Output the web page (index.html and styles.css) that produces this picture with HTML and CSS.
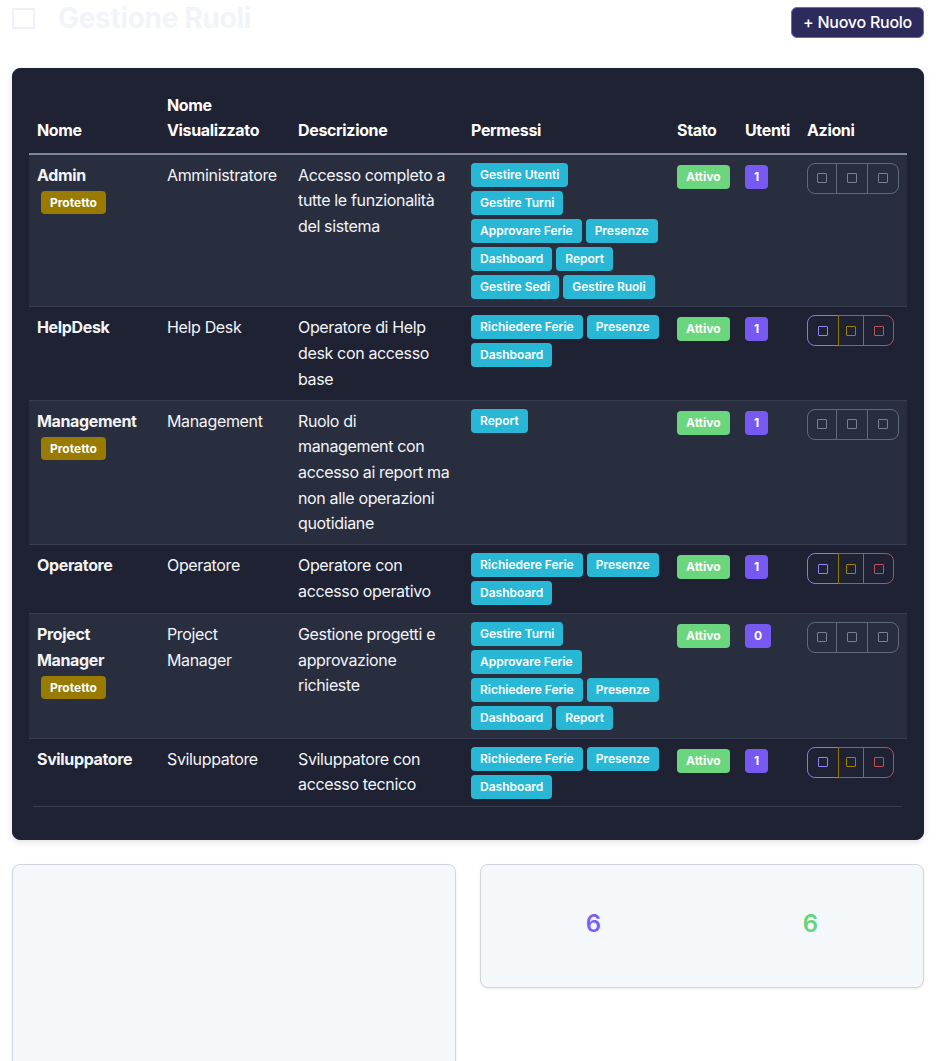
FILE: index.html
```html
<!DOCTYPE html>
<html lang="it">
<head>
<meta charset="utf-8">
<title>Gestione Ruoli</title>
<link rel="stylesheet" href="styles.css">
</head>
<body>
<div class="page">
  <header class="page-head">
    <h3 class="page-title"><span class="title-icon"></span>Gestione Ruoli</h3>
    <button class="btn-new">+ Nuovo Ruolo</button>
  </header>

  <section class="roles-card">
    <table class="roles-table">
      <colgroup>
        <col class="c-name"><col class="c-disp"><col class="c-desc"><col class="c-perm"><col class="c-state"><col class="c-users"><col class="c-act">
      </colgroup>
      <thead>
        <tr>
          <th>Nome</th>
          <th>Nome Visualizzato</th>
          <th>Descrizione</th>
          <th>Permessi</th>
          <th>Stato</th>
          <th>Utenti</th>
          <th>Azioni</th>
        </tr>
      </thead>
      <tbody>
        <tr class="striped">
          <td><div class="role-name">Admin</div><span class="protected">Protetto</span></td>
          <td>Amministratore</td>
          <td>Accesso completo a tutte le funzionalità del sistema</td>
          <td><div class="perm-list"><span class="chip">Gestire Utenti</span><span class="chip">Gestire Turni</span><span class="chip">Approvare Ferie</span><span class="chip">Presenze</span><span class="chip">Dashboard</span><span class="chip">Report</span><span class="chip">Gestire Sedi</span><span class="chip">Gestire Ruoli</span></div></td>
          <td class="badge-cell"><span class="badge badge-green">Attivo</span></td>
          <td class="badge-cell"><span class="badge badge-purple">1</span></td>
          <td><div class="actions locked"><button class="act act-edit"><span class="glyph"></span></button><button class="act act-key"><span class="glyph"></span></button><button class="act act-del"><span class="glyph"></span></button></div></td>
        </tr>
        <tr>
          <td><div class="role-name">HelpDesk</div></td>
          <td>Help Desk</td>
          <td>Operatore di Help desk con accesso base</td>
          <td><div class="perm-list"><span class="chip">Richiedere Ferie</span><span class="chip">Presenze</span><span class="chip">Dashboard</span></div></td>
          <td class="badge-cell"><span class="badge badge-green">Attivo</span></td>
          <td class="badge-cell"><span class="badge badge-purple">1</span></td>
          <td><div class="actions"><button class="act act-edit"><span class="glyph"></span></button><button class="act act-key"><span class="glyph"></span></button><button class="act act-del"><span class="glyph"></span></button></div></td>
        </tr>
        <tr class="striped">
          <td><div class="role-name">Management</div><span class="protected">Protetto</span></td>
          <td>Management</td>
          <td>Ruolo di management con accesso ai report ma non alle operazioni quotidiane</td>
          <td><div class="perm-list"><span class="chip">Report</span></div></td>
          <td class="badge-cell"><span class="badge badge-green">Attivo</span></td>
          <td class="badge-cell"><span class="badge badge-purple">1</span></td>
          <td><div class="actions locked"><button class="act act-edit"><span class="glyph"></span></button><button class="act act-key"><span class="glyph"></span></button><button class="act act-del"><span class="glyph"></span></button></div></td>
        </tr>
        <tr>
          <td><div class="role-name">Operatore</div></td>
          <td>Operatore</td>
          <td>Operatore con accesso operativo</td>
          <td><div class="perm-list"><span class="chip">Richiedere Ferie</span><span class="chip">Presenze</span><span class="chip">Dashboard</span></div></td>
          <td class="badge-cell"><span class="badge badge-green">Attivo</span></td>
          <td class="badge-cell"><span class="badge badge-purple">1</span></td>
          <td><div class="actions"><button class="act act-edit"><span class="glyph"></span></button><button class="act act-key"><span class="glyph"></span></button><button class="act act-del"><span class="glyph"></span></button></div></td>
        </tr>
        <tr class="striped">
          <td><div class="role-name">Project Manager</div><span class="protected">Protetto</span></td>
          <td>Project Manager</td>
          <td>Gestione progetti e approvazione richieste</td>
          <td><div class="perm-list"><span class="chip">Gestire Turni</span><span class="chip">Approvare Ferie</span><span class="chip">Richiedere Ferie</span><span class="chip">Presenze</span><span class="chip">Dashboard</span><span class="chip">Report</span></div></td>
          <td class="badge-cell"><span class="badge badge-green">Attivo</span></td>
          <td class="badge-cell"><span class="badge badge-purple">0</span></td>
          <td><div class="actions locked"><button class="act act-edit"><span class="glyph"></span></button><button class="act act-key"><span class="glyph"></span></button><button class="act act-del"><span class="glyph"></span></button></div></td>
        </tr>
        <tr class="last">
          <td><div class="role-name">Sviluppatore</div></td>
          <td>Sviluppatore</td>
          <td>Sviluppatore con accesso tecnico</td>
          <td><div class="perm-list"><span class="chip">Richiedere Ferie</span><span class="chip">Presenze</span><span class="chip">Dashboard</span></div></td>
          <td class="badge-cell"><span class="badge badge-green">Attivo</span></td>
          <td class="badge-cell"><span class="badge badge-purple">1</span></td>
          <td><div class="actions"><button class="act act-edit"><span class="glyph"></span></button><button class="act act-key"><span class="glyph"></span></button><button class="act act-del"><span class="glyph"></span></button></div></td>
        </tr>
      </tbody>
    </table>
    <div class="table-end"></div>
  </section>

  <section class="bottom">
    <div class="panel panel-left"></div>
    <div class="panel">
      <div class="stats">
        <div class="stat-num stat-purple">6</div>
        <div class="stat-num stat-green">6</div>
      </div>
    </div>
  </section>
</div>
</body>
</html>
```

FILE: styles.css
```css
* {
  box-sizing: border-box;
}

body {
  margin: 0;
  font-family: Inter, "Noto Sans", "Liberation Sans", sans-serif;
  background: #ffffff;
  color: #212529;
}

.page {
  padding: 2px 12px 0;
}

.page-head {
  display: flex;
  justify-content: space-between;
  align-items: center;
  margin-bottom: 24px;
}

.page-title {
  margin: 0 0 8px;
  display: flex;
  align-items: center;
  font-size: 28px;
  line-height: 1.2;
  font-weight: 700;
  letter-spacing: -0.3px;
  color: #f1f4f8;
}

.title-icon {
  width: 23px;
  height: 21px;
  border: 2px solid #eef2f6;
  margin-right: 23px;
}

.btn-new {
  font-family: inherit;
  font-size: 16px;
  font-weight: 500;
  line-height: 21px;
  letter-spacing: -0.25px;
  color: #ffffff;
  background: #2d2a5c;
  border: 1px solid #6e5ce6;
  border-radius: 6px;
  padding: 4px 11px;
}

.roles-card {
  background: #1e2233;
  border: 1px solid #1e2233;
  border-radius: 8px;
  padding: 16px 16px 16px;
  box-shadow: 0 2px 6px rgba(0, 0, 0, 0.12);
}

.roles-table {
  width: 100%;
  table-layout: fixed;
  border-collapse: collapse;
  color: #f2f4f7;
  font-size: 16px;
  line-height: 1.6;
  letter-spacing: -0.35px;
}

.c-name { width: 130px; }
.c-disp { width: 131px; }
.c-desc { width: 173px; }
.c-perm { width: 206px; }
.c-state { width: 68px; }
.c-users { width: 62px; }
.c-act { width: 108px; }

.roles-table th {
  text-align: left;
  vertical-align: bottom;
  font-weight: 700;
  color: #ffffff;
  padding: 8px 8px 9px;
  border-bottom: 2px solid #7e8799;
}

.roles-table td {
  vertical-align: top;
  padding: 8px 8px 7.6px;
  border-bottom: 1px solid #383e4f;
}

.roles-table tr.striped td {
  background: #292e3f;
}

.roles-table tr.last td {
  border-bottom: none;
}

.table-end {
  height: 1px;
  margin: 0 5px 16px 4px;
  background: #383e4f;
}

.role-name {
  font-weight: 700;
}

.protected {
  display: flex;
  align-items: center;
  width: max-content;
  height: 23px;
  margin: 3px 0 0 4px;
  padding: 0 9px;
  border-radius: 4px;
  background: #987b00;
  color: #ffffff;
  font-size: 12px;
  font-weight: 700;
  line-height: 1;
  letter-spacing: 0;
}

.perm-list {
  display: flex;
  flex-wrap: wrap;
  gap: 4px;
}

.chip {
  display: inline-flex;
  align-items: center;
  height: 24px;
  padding: 0 9px;
  border-radius: 4px;
  background: #28b8d6;
  color: #ffffff;
  font-size: 12px;
  font-weight: 600;
  line-height: 1;
  letter-spacing: 0;
  white-space: nowrap;
}

.roles-table td.badge-cell {
  padding-top: 8px;
}

.badge {
  display: inline-flex;
  align-items: center;
  height: 24px;
  padding: 0 9px;
  border-radius: 4px;
  color: #ffffff;
  font-size: 12px;
  font-weight: 700;
  line-height: 1;
  letter-spacing: 0;
}

.badge-green {
  background: #6bd67e;
}

.badge-purple {
  background: #7759f2;
}

.actions {
  display: inline-flex;
}

.act {
  height: 31px;
  padding: 0;
  margin: 0 0 0 -1px;
  display: flex;
  align-items: center;
  justify-content: center;
  background: transparent;
  border: 1px solid;
  border-radius: 0;
}

.act:first-child {
  margin-left: 0;
  border-radius: 8px 0 0 8px;
}

.act:last-child {
  border-radius: 0 8px 8px 0;
}

.glyph {
  width: 10px;
  height: 10px;
  border: 1.5px solid currentColor;
  border-radius: 1px;
}

.act-edit {
  width: 32px;
  border-color: #8677ee;
  color: #8f82f7;
}

.act-key {
  width: 26px;
  border-color: #8f7400;
  color: #9c8000;
}

.act-del {
  width: 31px;
  border-color: #b84c57;
  color: #c0505a;
}

.actions.locked .act {
  border-color: #626979;
  color: #7a808e;
}

.actions.locked .act-edit {
  width: 30px;
}

.actions.locked .act-key,
.actions.locked .act-del {
  width: 32px;
}

.bottom {
  display: grid;
  grid-template-columns: 1fr 1fr;
  gap: 24px;
  margin-top: 24px;
  align-items: start;
}

.panel {
  background: #f5f8fb;
  border: 1px solid #d0d5dd;
  border-radius: 8px;
  box-shadow: 0 1px 3px rgba(0, 0, 0, 0.08);
}

.panel-left {
  height: 260px;
}

.stats {
  display: grid;
  grid-template-columns: 1fr 1fr;
  padding: 45px 4px 48px;
}

.stat-num {
  text-align: center;
  font-size: 24px;
  line-height: 1.2;
  font-weight: 600;
}

.stat-purple {
  color: #7a5ffa;
}

.stat-green {
  color: #63d47d;
}
```
